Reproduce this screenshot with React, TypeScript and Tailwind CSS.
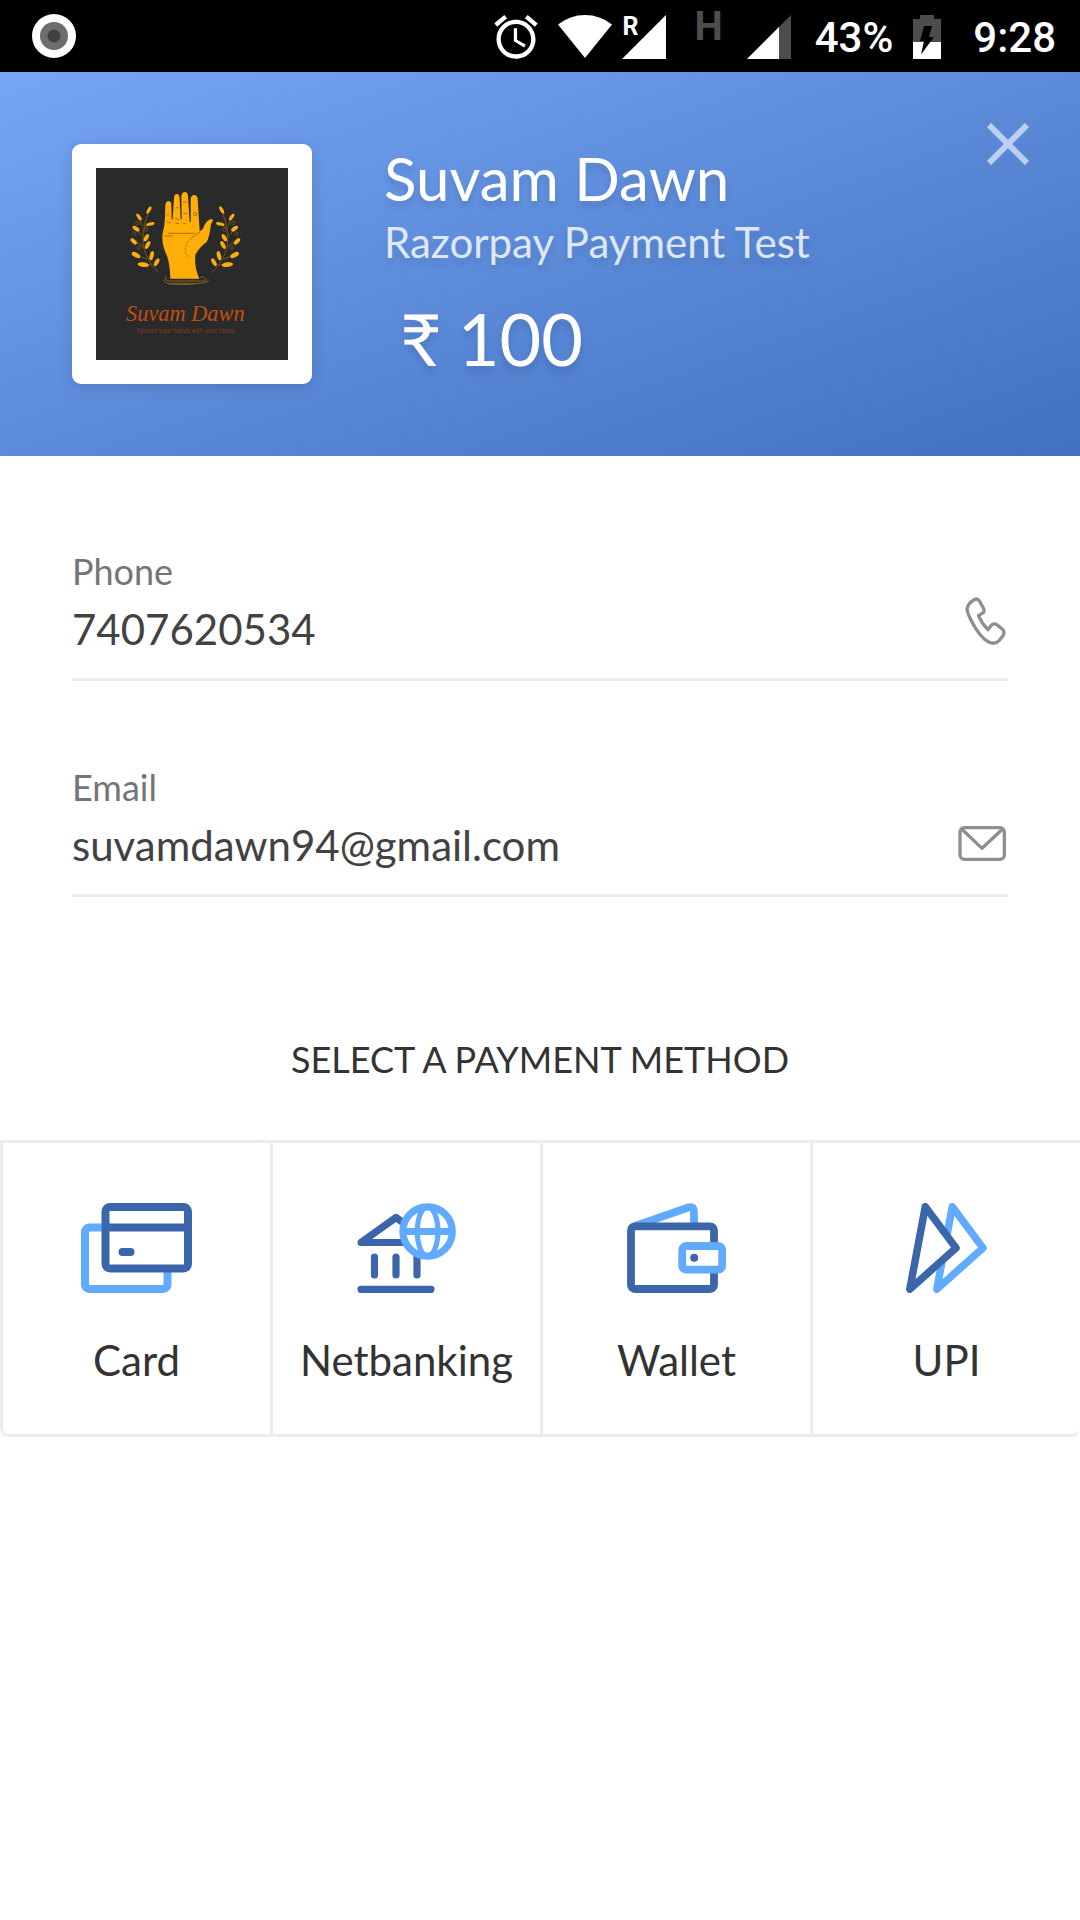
import type { ReactNode } from "react";

const DARK = "#3b66aa";
const LIGHT = "#61abff";

function StatusBar() {
  return (
    <div className="flex h-[72px] items-center justify-between bg-black pl-8 pr-6 font-['Roboto',sans-serif] text-white">
      <svg width="44" height="44" viewBox="0 0 44 44" aria-hidden="true">
        <circle cx="22" cy="22" r="22" fill="#fff" />
        <circle cx="22" cy="22" r="14" fill="#6d6d6d" />
        <circle cx="22" cy="22" r="6.5" fill="#404040" />
      </svg>
      <div className="flex items-center pt-0.5">
        <svg width="52" height="52" viewBox="0 0 24 24" fill="#fff" aria-hidden="true">
          <path d="M22 5.72l-4.6-3.86-1.29 1.53 4.6 3.86L22 5.72zM7.88 3.39L6.6 1.86 2 5.71l1.29 1.53 4.59-3.85zM12.5 8H11v6l4.75 2.85.75-1.23-4-2.37V8zM12 4c-4.97 0-9 4.03-9 9s4.02 9 9 9c4.97 0 9-4.03 9-9s-4.03-9-9-9zm0 16c-3.87 0-7-3.13-7-7s3.13-7 7-7 7 3.13 7 7-3.13 7-7 7z" />
        </svg>
        <svg className="ml-4" width="54" height="44" viewBox="0 0 54 44" fill="#fff" aria-hidden="true">
          <path d="M0 9.5 Q12 0 27 0 T54 9.5 L27 43Z" />
        </svg>
        <div className="relative ml-2.5">
          <svg width="44" height="44" viewBox="0 0 44 44" fill="#fff" aria-hidden="true">
            <path d="M0 44 L44 0 V44Z" />
          </svg>
          <span className="absolute left-0 top-0 text-[25px] font-bold leading-[24px]">R</span>
        </div>
        <span className="ml-7 pb-5 text-[40px] font-bold leading-[48px] text-[#4d4d4d]">H</span>
        <svg className="ml-6" width="44" height="44" viewBox="0 0 44 44" aria-hidden="true">
          <path d="M0 44 L44 0 V44Z" fill="#4d4d4d" />
          <path d="M0 44 L32 12 V44Z" fill="#fff" />
        </svg>
        <span className="ml-6 pt-0.5 text-[42px] font-medium leading-[48px]">43%</span>
        <svg className="ml-5" width="28" height="44" viewBox="0 0 28 44" aria-hidden="true">
          <path d="M7 0h14v4h7v23H0V4h7z" fill="#4d4d4d" />
          <path d="M0 27h28v17H0z" fill="#fff" />
          <path d="M11 11h8l-3 11h5L8 39.5l3-13.5H7z" fill="#000" />
        </svg>
        <span className="ml-8 pt-0.5 text-[42px] font-medium leading-[48px]">9:28</span>
      </div>
    </div>
  );
}

const leaves = [
  [267, 240, 12, 5, -60],
  [237, 261, 12, 5, 55],
  [271, 282, 13, 5, -15],
  [228, 296, 12, 6, 35],
  [259, 323, 12, 6, -60],
  [221, 334, 12, 6, 45],
  [263, 345, 13, 6, -60],
  [228, 375, 14, 7, 28],
  [275, 377, 14, 6, -75],
  [250, 404, 17, 7, 8],
  [290, 397, 13, 6, -60],
];

function Laurel() {
  return (
    <>
      <path
        d="M295 427 Q262 395 250 350 Q244 300 266 245 M250 350 L222 330 M248 300 L268 284 M248 288 L236 262 M247 318 L228 298 M262 388 L230 376 M275 405 L252 404 M249 335 L260 320"
        fill="none"
        stroke="#76561a"
        strokeWidth="3"
      />
      <g fill="none" stroke="#76561a" strokeWidth="2.5">
        <circle cx="232" cy="279" r="5" />
        <circle cx="223" cy="311" r="5" />
        <circle cx="258" cy="299" r="5" />
        <circle cx="237" cy="353" r="5" />
      </g>
      {leaves.map(([x, y, rx, ry, a]) => (
        <ellipse key={`${x}-${y}`} cx={x} cy={y} rx={rx} ry={ry} transform={`rotate(${a} ${x} ${y})`} fill="#fdae0a" />
      ))}
    </>
  );
}

function Logo() {
  return (
    <svg className="size-48" viewBox="108 114 576 576" role="img" aria-label="Suvam Dawn logo">
      <path d="M108 114h576v576H108z" fill="#2a2a2a" />
      <Laurel />
      <g transform="translate(752 0) scale(-1 1)">
        <Laurel />
      </g>
      <path
        d="M331 446 Q330 405 322 380 Q305 345 307 316 Q314 290 315 262 L316 224 Q318 213 326 213 Q334 214 334 226 L335 268 L338 268 L342 204 Q343 191 351 192 Q359 193 359 206 L362 268 L365 268 L364 198 Q366 186 375 186 Q384 187 384 200 L389 276 L392 276 L392 206 Q394 195 403 195 Q412 196 413 207 L419 304 Q428 302 433 286 Q442 268 456 267 Q462 271 453 281 Q449 320 440 336 Q418 352 406 374 Q402 410 418 446Z"
        fill="#feae07"
      />
      <g fill="none" stroke="#a87512" strokeWidth="3">
        <path d="M325 310H405M311 318H338M420 306Q404 316 392 326" />
        <path d="M392 326Q374 342 376 366Q380 380 392 380" strokeDasharray="7 4" />
        <path d="M347 234l10-1M370 217l10-2M345 266l12 2M320 276l12 3M346 280h12M370 250l12 1M370 280l9 2M319 254l8-2" />
        <circle cx="406" cy="252" r="5" />
      </g>
      <path
        d="M320 438 Q306 450 330 453 H436 Q440 440 420 441 M310 450 Q312 462 350 460 H420 Q450 456 444 448 M325 462 Q370 466 405 462"
        fill="none"
        stroke="#86611a"
        strokeWidth="3"
      />
      <text
        x="376"
        y="572"
        textAnchor="middle"
        fontFamily="'Liberation Serif', serif"
        fontStyle="italic"
        fontSize="67"
        fill="#c04f12"
      >
        Suvam Dawn
      </text>
      <text
        x="376"
        y="609"
        textAnchor="middle"
        fontFamily="'Liberation Sans', sans-serif"
        fontSize="19"
        fill="#7c3c1c"
      >
        Spread your hands with your ideas
      </text>
    </svg>
  );
}

function Header() {
  return (
    <header className="flex min-h-[384px] items-start gap-[72px] bg-linear-to-br from-[#76a5f4] to-[#4170be] pb-[72px] pl-[72px] pr-12 pt-12">
      <div className="mt-6 shrink-0 rounded-[9px] bg-white p-6 shadow-[0_3px_15px_rgba(0,0,0,0.12)]">
        <Logo />
      </div>
      <div className="mt-6 min-w-0 flex-1 text-white [text-shadow:0_6px_6px_rgba(0,0,0,0.1)]">
        <h1 className="text-[60px] leading-[68px]">Suvam Dawn</h1>
        <p className="text-[42px] leading-[60px] opacity-80">Razorpay Payment Test</p>
        <p className="flex gap-4 pl-4 pt-6 text-[72px] leading-[84px]">
          <span>₹</span>
          <span>100</span>
        </p>
      </div>
      <button type="button" aria-label="Close" className="p-[3px]">
        <svg width="42" height="42" viewBox="0 0 42 42" stroke="#fff" strokeWidth="6" fill="none" opacity="0.6">
          <path d="M2 2L40 40M40 2L2 40" />
        </svg>
      </button>
    </header>
  );
}

function Field(props: { id: string; label: string; type: string; value: string; icon: ReactNode }) {
  return (
    <div className="border-b-[3px] border-[#ebecf1] pb-[22px]">
      <label htmlFor={props.id} className="block text-[36px] leading-[48px] text-[#757575]">
        {props.label}
      </label>
      <div className="flex items-center gap-6 pr-0.5 pt-[7px]">
        <input
          id={props.id}
          type={props.type}
          defaultValue={props.value}
          className="h-[54px] min-w-0 flex-1 bg-transparent text-[42px] leading-[54px] text-[#424242] outline-none"
        />
        {props.icon}
      </div>
    </div>
  );
}

function PhoneIcon() {
  return (
    <svg className="-mt-4" width="41" height="48" viewBox="80 80 122 144" fill="none" stroke="#8f8f8f" strokeWidth="10" strokeLinejoin="round" aria-hidden="true">
      <path d="M103 91 Q114 81 122 91 L133 110 Q140 122 134 127 L120 136 Q129 158 148 178 L159 164 Q167 158 175 163 L192 177 Q200 187 193 197 L183 210 Q169 224 152 216 Q125 202 100 154 Q84 124 86 114 Q89 100 103 91Z" />
    </svg>
  );
}

function MailIcon() {
  return (
    <svg className="mb-1" width="48" height="35" viewBox="57 765 144 105" fill="none" stroke="#8f8f8f" strokeWidth="10" strokeLinejoin="round" aria-hidden="true">
      <rect x="63" y="770" width="133" height="95" rx="13" />
      <path d="M68 774 L129 832 L191 774" />
    </svg>
  );
}

function CardIcon() {
  return (
    <svg width="111" height="90" viewBox="0 0 111 90" fill="#fff" strokeWidth="8" aria-hidden="true">
      <rect x="4" y="24.5" width="82.5" height="61.5" rx="4.5" stroke={LIGHT} />
      <rect x="24.5" y="4" width="82.5" height="61.5" rx="4.5" stroke={DARK} />
      <path d="M24 24.5H107" stroke={DARK} />
      <path d="M41.5 49H49.5" stroke={DARK} strokeLinecap="round" />
    </svg>
  );
}

function BankIcon() {
  return (
    <svg width="99" height="90" viewBox="0 0 99 90" fill="#fff" strokeWidth="7.2" strokeLinecap="round" strokeLinejoin="round" aria-hidden="true">
      <path d="M39 14.5 L74 39.5 H4Z" stroke={DARK} />
      <path d="M17.5 54V72M39 54V72M60 54V72M4 86.3H74" stroke={DARK} />
      <circle cx="70.6" cy="28.5" r="24.7" stroke={LIGHT} />
      <ellipse cx="70.6" cy="28.5" rx="10.3" ry="24.7" stroke={LIGHT} strokeWidth="5.2" fill="none" />
      <path d="M47 28.5H94" stroke={LIGHT} />
    </svg>
  );
}

function WalletIcon() {
  return (
    <svg width="99" height="90" viewBox="0 0 99 90" fill="#fff" strokeWidth="7.8" strokeLinejoin="round" aria-hidden="true">
      <path d="M8 23 L62 4.3 Q67 3 67 9 V23" stroke={LIGHT} />
      <rect x="4" y="23.3" width="83" height="62.7" rx="4" stroke={DARK} />
      <rect x="55.2" y="43" width="40" height="23.7" rx="4" stroke={LIGHT} />
      <circle cx="67.2" cy="54.8" r="4" fill={DARK} />
    </svg>
  );
}

function UpiIcon() {
  return (
    <svg width="81" height="90" viewBox="0 0 81 90" fill="#fff" strokeWidth="7.5" strokeLinejoin="round" aria-hidden="true">
      <path d="M46.3 3.8 L77 45 L30.8 86.2Z" stroke={LIGHT} />
      <path d="M19.3 3.8 L50 45 L3.8 86.2Z" stroke={DARK} />
    </svg>
  );
}

const methods = [
  { name: "Card", icon: <CardIcon /> },
  { name: "Netbanking", icon: <BankIcon /> },
  { name: "Wallet", icon: <WalletIcon /> },
  { name: "UPI", icon: <UpiIcon /> },
];

export default function App() {
  return (
    <div className="min-h-screen bg-white font-['Lato',sans-serif]">
      <StatusBar />
      <Header />
      <main>
        <form className="flex flex-col gap-[82px] px-[72px] pt-[91px]">
          <Field id="phone" label="Phone" type="tel" value="7407620534" icon={<PhoneIcon />} />
          <Field id="email" label="Email" type="email" value="suvamdawn94@gmail.com" icon={<MailIcon />} />
        </form>
        <h2 className="pb-[57px] pt-[138px] text-center text-[36px] leading-[48px] text-[#333]">
          SELECT A PAYMENT METHOD
        </h2>
        <div className="grid grid-cols-4 overflow-hidden rounded-b-[9px] border-y-[3px] border-[#ebecf1]">
          {methods.map((m) => (
            <button
              key={m.name}
              type="button"
              className="flex flex-col items-center gap-[42px] border-l-[3px] border-[#ebecf1] pb-12 pt-[60px] text-[42px] leading-[51px] text-[#333]"
            >
              {m.icon}
              {m.name}
            </button>
          ))}
        </div>
      </main>
    </div>
  );
}
